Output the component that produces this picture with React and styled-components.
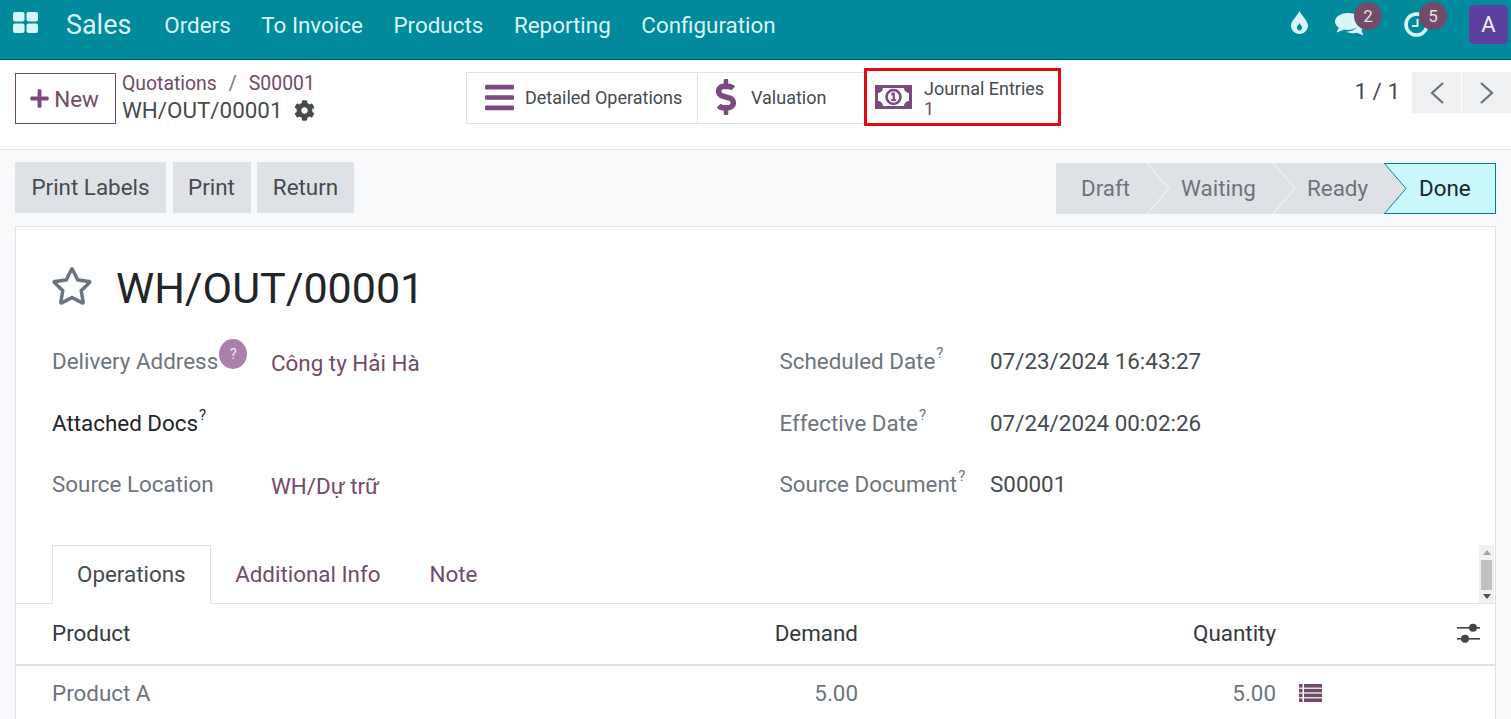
import styled, { createGlobalStyle } from "styled-components";
import { FaBars, FaDollarSign, FaCog, FaPlus, FaRegStar } from "react-icons/fa";

const purple = "#714b67";
const iconPurple = "#7a4a80";
const teal = "#018a9c";
const tray = "#d8f6f8";

const GlobalStyle = createGlobalStyle`
  html, body {
    margin: 0;
    height: 719px;
    overflow: hidden;
    background: #f8f9fa;
    font-family: "Roboto", "Noto Sans", sans-serif;
    color: #212529;
  }
  * { box-sizing: border-box; }
`;

function AppsIcon() {
  return (
    <svg width="25" height="21" viewBox="0 0 25 21" fill={tray}>
      <rect x="0" y="0" width="11.5" height="9.5" rx="2" />
      <rect x="13.5" y="0" width="11.5" height="9.5" rx="2" />
      <rect x="0" y="11.5" width="11.5" height="9.5" rx="2" />
      <rect x="13.5" y="11.5" width="11.5" height="9.5" rx="2" />
    </svg>
  );
}

function DropIcon() {
  return (
    <DropSvg width="17" height="23" viewBox="0 0 17 23">
      <path
        fill={tray}
        d="M8.5 0C10 4 17 9.5 17 14.5 17 19.2 13.2 23 8.5 23S0 19.2 0 14.5C0 9.5 7 4 8.5 0z"
      />
      <path
        fill={teal}
        d="M8.5 12c.6 1.6 2.6 3 2.6 4.8 0 1.4-1.2 2.6-2.6 2.6s-2.6-1.2-2.6-2.6c0-1.8 2-3.2 2.6-4.8z"
      />
    </DropSvg>
  );
}

function ChatIcon() {
  return (
    <svg width="29" height="23" viewBox="0 0 29 23" fill={tray}>
      <ellipse cx="13" cy="8.5" rx="13" ry="8.5" />
      <path d="M4.5 13L1.5 19.5 11 16z" />
      <path d="M11 18.5C17 18.5 23 16 25 10 28 11.5 28.5 15.5 26.5 17.5L28.5 22.5 22 19.8C18 20.8 14 20.2 11 18.5z" />
    </svg>
  );
}

function ClockIcon() {
  return (
    <svg width="25" height="25" viewBox="0 0 25 25" fill="none" stroke={tray}>
      <circle cx="12.5" cy="12.5" r="10.5" strokeWidth="3.6" />
      <path d="M13.5 7v7H8" strokeWidth="2" />
    </svg>
  );
}

function MoneyIcon() {
  return (
    <MoneySvg width="37" height="24" viewBox="0 0 37 24">
      <rect width="37" height="24" fill={iconPurple} />
      <path
        fill="#fff"
        d="M8 3H29a5 5 0 0 0 5 5V16a5 5 0 0 0-5 5H8a5 5 0 0 0-5-5V8a5 5 0 0 0 5-5z"
      />
      <circle cx="18.5" cy="12" r="7" fill="#fff" stroke={iconPurple} strokeWidth="2.6" />
      <path fill={iconPurple} d="M16.6 7.6h3.2v6.6h1.3V16h-5v-1.8h1.5V10l-1.5.7z" />
    </MoneySvg>
  );
}

function AdjustIcon() {
  return (
    <svg width="24" height="22" viewBox="0 0 24 22" fill="#3f4549">
      <rect x="0" y="5" width="23" height="1.6" />
      <rect x="0" y="16" width="23" height="1.6" />
      <circle cx="16" cy="5.8" r="4" />
      <circle cx="8" cy="16.8" r="4" />
    </svg>
  );
}

function ListIcon() {
  return (
    <svg width="23" height="18" viewBox="0 0 23 18" fill={purple}>
      <rect x="0" y="0" width="3.5" height="3.6" />
      <rect x="5" y="0" width="18" height="3.6" />
      <rect x="0" y="4.8" width="3.5" height="3.6" />
      <rect x="5" y="4.8" width="18" height="3.6" />
      <rect x="0" y="9.6" width="3.5" height="3.6" />
      <rect x="5" y="9.6" width="18" height="3.6" />
      <rect x="0" y="14.4" width="3.5" height="3.6" />
      <rect x="5" y="14.4" width="18" height="3.6" />
    </svg>
  );
}

function Chevron({ done }) {
  return (
    <Arrow viewBox="0 0 23 51" preserveAspectRatio="none" $done={done}>
      <polyline points="0,0 22,25.5 0,51" />
    </Arrow>
  );
}

const menus = ["Orders", "To Invoice", "Products", "Reporting", "Configuration"];
const stages = [
  { name: "Draft", width: 91, pad: 25 },
  { name: "Waiting", width: 126, pad: 34 },
  { name: "Ready", width: 111, pad: 34 },
];
const actions = [
  { name: "Print Labels", width: 151 },
  { name: "Print", width: 78 },
  { name: "Return", width: 97 },
];

export default function App() {
  return (
    <Page>
      <GlobalStyle />
      <Navbar>
        <AppsButton>
          <AppsIcon />
        </AppsButton>
        <Brand>Sales</Brand>
        {menus.map((m) => (
          <MenuItem key={m}>{m}</MenuItem>
        ))}
        <Systray>
          <TrayItem $gap={27}>
            <DropIcon />
          </TrayItem>
          <TrayItem $gap={40}>
            <ChatIcon />
            <Badge>2</Badge>
          </TrayItem>
          <TrayItem $gap={40}>
            <ClockIcon />
            <Badge>5</Badge>
          </TrayItem>
          <Avatar>A</Avatar>
        </Systray>
      </Navbar>

      <ControlPanel>
        <LeftBlock>
          <NewButton>
            <FaPlus size={21} color={iconPurple} />
            New
          </NewButton>
          <Crumbs>
            <CrumbTop>
              <span>Quotations</span>
              <CrumbSep>/</CrumbSep>
              <span>S00001</span>
            </CrumbTop>
            <CrumbCurrent>
              WH/OUT/00001
              <FaCog size={21} color="#444b50" />
            </CrumbCurrent>
          </Crumbs>
        </LeftBlock>
        <StatButtons>
          <StatButton $width={231} $pad={16} $gap={9}>
            <FaBars size={33} color={iconPurple} />
            Detailed Operations
          </StatButton>
          <StatButton $width={167} $pad={10} $gap={7}>
            <FaDollarSign size={36} color={iconPurple} />
            Valuation
          </StatButton>
          <HighlightedStat>
            <MoneyIcon />
            <StatText>
              Journal Entries
              <StatValue>1</StatValue>
            </StatText>
          </HighlightedStat>
        </StatButtons>
        <Pager>
          <PagerCount>1 / 1</PagerCount>
          <PagerButton>
            <svg width="16" height="24" viewBox="0 0 16 24" fill="none" stroke="#6c7175" strokeWidth="2.2">
              <polyline points="14,2 3,12 14,22" />
            </svg>
          </PagerButton>
          <PagerButton>
            <svg width="16" height="24" viewBox="0 0 16 24" fill="none" stroke="#6c7175" strokeWidth="2.2">
              <polyline points="2,2 13,12 2,22" />
            </svg>
          </PagerButton>
        </Pager>
      </ControlPanel>

      <ActionBar>
        <Actions>
          {actions.map((a) => (
            <ActionButton key={a.name} $width={a.width}>
              {a.name}
            </ActionButton>
          ))}
        </Actions>
        <StatusBar>
          {stages.map((s, i) => (
            <Stage key={s.name} $width={s.width} $pad={s.pad}>
              {s.name}
              <Chevron done={i === 2} />
            </Stage>
          ))}
          <DoneStage>Done</DoneStage>
        </StatusBar>
      </ActionBar>

      <Sheet>
        <TitleRow>
          <Star size={42} color="#6c757d" />
          <Title>WH/OUT/00001</Title>
        </TitleRow>
        <Fields>
          <Label>
            Delivery Address
            <HelpDot>?</HelpDot>
          </Label>
          <LinkValue>Công ty Hải Hà</LinkValue>
          <Label>
            Scheduled Date<Help>?</Help>
          </Label>
          <Value>07/23/2024 16:43:27</Value>

          <Label $dark>
            Attached Docs<Help>?</Help>
          </Label>
          <Value />
          <Label>
            Effective Date<Help>?</Help>
          </Label>
          <Value>07/24/2024 00:02:26</Value>

          <Label>Source Location</Label>
          <LinkValue>WH/Dự trữ</LinkValue>
          <Label>
            Source Document<Help>?</Help>
          </Label>
          <Value>S00001</Value>
        </Fields>

        <TabBar>
          <Tab $active>Operations</Tab>
          <Tab>Additional Info</Tab>
          <Tab>Note</Tab>
          <Scrollbar>
            <ScrollArrow />
            <ScrollThumb />
            <ScrollArrow $down />
          </Scrollbar>
        </TabBar>

        <TableHead>
          <span>Product</span>
          <NumCell>Demand</NumCell>
          <NumCell>Quantity</NumCell>
          <AdjustCell>
            <AdjustIcon />
          </AdjustCell>
        </TableHead>
        <TableRow>
          <span>Product A</span>
          <NumCell>5.00</NumCell>
          <NumCell>5.00</NumCell>
          <ListCell>
            <ListIcon />
          </ListCell>
        </TableRow>
      </Sheet>
    </Page>
  );
}

const Page = styled.div`
  width: 1511px;
  height: 719px;
  overflow: hidden;
`;

const Navbar = styled.header`
  height: 60px;
  background: ${teal};
  border-bottom: 1px solid #015e6a;
  display: flex;
  align-items: center;
  padding: 0 0 10px 13px;
  color: ${tray};
`;

const AppsButton = styled.div`
  display: flex;
  width: 53px;
  margin-top: -5px;
`;

const Brand = styled.div`
  font-size: 26.9px;
  margin-right: 33px;
`;

const MenuItem = styled.div`
  font-size: 22.4px;
  margin-right: 30.6px;
`;

const Systray = styled.div`
  margin-left: auto;
  display: flex;
  align-items: center;
`;

const TrayItem = styled.div`
  position: relative;
  height: 25px;
  display: flex;
  align-items: center;
  margin-right: ${(p) => p.$gap}px;
`;

const DropSvg = styled.svg`
  margin-top: -5px;
`;

const Badge = styled.span`
  position: absolute;
  top: -10px;
  right: -18px;
  width: 28px;
  height: 28px;
  border-radius: 50%;
  background: ${purple};
  color: #eadfe7;
  font-size: 17px;
  display: flex;
  align-items: center;
  justify-content: center;
`;

const Avatar = styled.div`
  width: 39px;
  height: 39px;
  margin-right: 3px;
  border-radius: 5px;
  background: #5c3f9e;
  color: #f1eef8;
  font-size: 22px;
  display: flex;
  align-items: center;
  justify-content: center;
`;

const ControlPanel = styled.div`
  height: 90px;
  background: #fff;
  border-bottom: 1px solid #dee2e6;
  display: flex;
  align-items: flex-start;
  padding: 12px 0 0 15px;
`;

const LeftBlock = styled.div`
  width: 451px;
  display: flex;
  gap: 6px;
`;

const NewButton = styled.button`
  width: 101px;
  height: 51px;
  margin-top: 1px;
  background: #fff;
  border: 1px solid ${purple};
  color: ${purple};
  font: 400 22.4px "Roboto", sans-serif;
  display: flex;
  align-items: center;
  justify-content: center;
  gap: 4px;
  padding: 0 3px 0 0;
`;

const Crumbs = styled.div`
  display: flex;
  flex-direction: column;
`;

const CrumbTop = styled.div`
  font-size: 19.4px;
  line-height: 23px;
  color: ${purple};
  display: flex;
  gap: 12px;
`;

const CrumbSep = styled.span`
  color: #6c757d;
`;

const CrumbCurrent = styled.div`
  font-size: 22.4px;
  line-height: 31px;
  color: #444b50;
  display: flex;
  align-items: center;
  gap: 11px;
`;

const StatButtons = styled.div`
  display: flex;
  height: 52px;
  border: 1px solid #dee2e6;
  border-right: 0;
`;

const StatButton = styled.div`
  width: ${(p) => p.$width}px;
  border-right: 1px solid #dee2e6;
  display: flex;
  align-items: center;
  gap: ${(p) => p.$gap}px;
  padding: 0 0 2px ${(p) => p.$pad}px;
  font-size: 18px;
  color: #444b50;
`;

const HighlightedStat = styled.div`
  width: 197px;
  height: 58px;
  margin: -5px 0 0 -1px;
  border: 3px solid #e00b12;
  background: #fff;
  display: flex;
  align-items: center;
  gap: 12px;
  padding: 0 0 2px 8px;
`;

const MoneySvg = styled.svg`
  margin-top: 2px;
`;

const StatText = styled.div`
  font-size: 18px;
  line-height: 20px;
  padding-top: 6px;
  color: #444b50;
  display: flex;
  flex-direction: column;
`;

const StatValue = styled.span`
  color: ${purple};
`;

const Pager = styled.div`
  margin-left: auto;
  display: flex;
  gap: 1px;
`;

const PagerCount = styled.div`
  font-size: 22.4px;
  line-height: 38px;
  color: #444b50;
  margin-right: 11px;
`;

const PagerButton = styled.div`
  width: 49px;
  height: 41px;
  background: #eef0f2;
  display: flex;
  align-items: center;
  justify-content: center;
`;

const ActionBar = styled.div`
  height: 76px;
  padding: 12px 15px 0;
  display: flex;
  justify-content: space-between;
  align-items: flex-start;
`;

const Actions = styled.div`
  display: flex;
  gap: 6.5px;
`;

const ActionButton = styled.button`
  width: ${(p) => p.$width}px;
  height: 51px;
  padding: 0 0 2px;
  border: 0;
  background: #dee2e6;
  color: #444b50;
  font: 400 22.4px "Roboto", sans-serif;
`;

const StatusBar = styled.div`
  display: flex;
  height: 51px;
  margin-top: 1px;
`;

const Stage = styled.div`
  position: relative;
  width: ${(p) => p.$width}px;
  background: #dee2e6;
  color: #6c757d;
  font-size: 22.4px;
  display: flex;
  align-items: center;
  padding: 0 0 2px ${(p) => p.$pad}px;
`;

const Arrow = styled.svg`
  position: absolute;
  left: 100%;
  top: 0;
  width: 23px;
  height: 51px;
  z-index: 1;
  overflow: visible;
  fill: #dee2e6;
  stroke: ${(p) => (p.$done ? teal : "#f8f9fa")};
  stroke-width: 1;
`;

const DoneStage = styled.div`
  width: 112px;
  background: #c9f8fd;
  border: 1px solid #017e84;
  border-left: 0;
  color: #212529;
  font-size: 22.4px;
  display: flex;
  align-items: center;
  padding: 0 0 2px 35px;
`;

const Sheet = styled.main`
  margin: 0 15px;
  height: 500px;
  background: #fff;
  border: 1px solid #dee2e6;
`;

const TitleRow = styled.div`
  display: flex;
  align-items: center;
  gap: 23px;
  padding: 30px 0 0 35px;
  height: 92px;
`;

const Star = styled(FaRegStar)`
  margin-top: -5px;
`;

const Title = styled.h1`
  margin: 0;
  font-size: 43px;
  font-weight: 400;
`;

const Fields = styled.div`
  display: grid;
  grid-template-columns: 219px 508.5px 210.5px 1fr;
  grid-template-rows: 62px 61px 61px;
  padding: 11px 0 0 36px;
  height: 226px;
  align-items: center;
  font-size: 22.4px;
`;

const Label = styled.div`
  color: ${(p) => (p.$dark ? "#212529" : "#6c757d")};
  display: flex;
  align-items: flex-start;
  line-height: 28px;
`;

const Help = styled.sup`
  font-size: 15px;
  line-height: 16px;
  margin: -2px 0 0 1px;
`;

const HelpDot = styled.span`
  width: 28px;
  height: 30px;
  margin: -8px 0 0 1px;
  border-radius: 50%;
  background: #ab7fab;
  color: #eee;
  font-size: 14px;
  display: flex;
  align-items: center;
  justify-content: center;
`;

const Value = styled.div`
  color: #444b50;
`;

const LinkValue = styled.div`
  color: ${purple};
  padding-top: 4px;
`;

const TabBar = styled.div`
  height: 59px;
  display: flex;
  padding-left: 36px;
  border-bottom: 1px solid #dee2e6;
  font-size: 22.4px;
`;

const Tab = styled.div`
  height: 59px;
  padding: 0 ${(p) => (p.$active ? "24px" : "24.5px")} 2px;
  display: flex;
  align-items: center;
  color: ${(p) => (p.$active ? "#444b50" : purple)};
  ${(p) =>
    p.$active &&
    "background: #fff; border: 1px solid #dee2e6; border-bottom-color: #fff;"}
`;

const Scrollbar = styled.div`
  margin-left: auto;
  width: 15px;
  height: 58px;
  background: #f1f1f1;
  display: flex;
  flex-direction: column;
  align-items: center;
  justify-content: space-between;
  padding: 5px 0 4px;
  margin-right: 1px;
`;

const ScrollArrow = styled.div`
  width: 0;
  height: 0;
  border-left: 4px solid transparent;
  border-right: 4px solid transparent;
  ${(p) =>
    p.$down
      ? "border-top: 5px solid #505050;"
      : "border-bottom: 5px solid #a3a3a3;"}
`;

const ScrollThumb = styled.div`
  width: 11px;
  height: 30px;
  background: #c1c1c1;
`;

const TableHead = styled.div`
  height: 62px;
  display: grid;
  grid-template-columns: 716px 90px 418px 1fr;
  align-items: center;
  padding: 0 0 2px 36px;
  border-bottom: 2px solid #dee2e6;
  font-size: 22.4px;
  color: #343a40;
`;

const TableRow = styled(TableHead)`
  border-bottom: 0;
  height: 56px;
  color: #6c757d;
`;

const NumCell = styled.span`
  text-align: right;
`;

const AdjustCell = styled.div`
  display: flex;
  justify-content: flex-end;
  padding-right: 14px;
`;

const ListCell = styled.div`
  display: flex;
  padding-left: 23px;
`;
